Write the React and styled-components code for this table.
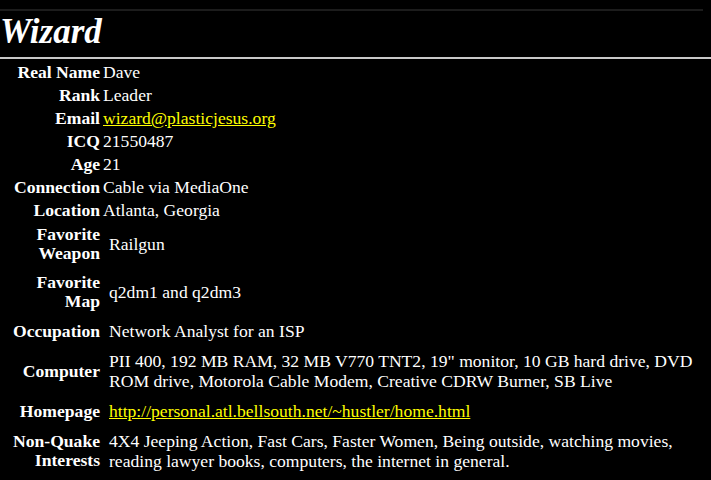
import React from 'react';
import styled, { createGlobalStyle } from 'styled-components';

const Global = createGlobalStyle`
  html, body {
    margin: 0;
    padding: 0;
    background: #000;
  }
  body {
    font-family: "Liberation Serif", "Times New Roman", serif;
    color: #fff;
  }
`

const Page = styled.div`
  width: 711px;
  height: 480px;
  overflow: hidden;
  background: #000;
`
const TopRule = styled.div`
  margin: 9px 8px 0 0;
  height: 2px;
  background: #1c1c1c;
`
const Title = styled.h1`
  margin: 0;
  padding: 1px 0 0 0;
  height: 45px;
  font-size: 35px;
  font-style: italic;
  font-weight: 700;
  line-height: 40px;
`
const Rule = styled.div`
  height: 2px;
  background: #c8c8c8;
`
const Info = styled.div`
  display: grid;
  grid-template-columns: 100px 1fr;
  padding-top: 2px;
`
const Label = styled.div`
  font-weight: 700;
  font-size: 17.6px;
  line-height: ${p => (p.$tall ? '19px' : '23px')};
  text-align: right;
  padding: ${p => (p.$tall ? '3px 0 7px' : '0')};
  display: flex;
  flex-direction: column;
  justify-content: center;
  align-items: flex-end;
  white-space: nowrap;
`
const Value = styled.div`
  font-size: 17.6px;
  line-height: ${p => (p.$tall ? '20px' : '23px')};
  padding: ${p => (p.$tall ? '3px 4px 7px 9px' : '0 0 0 3px')};
  display: flex;
  align-items: center;
`
const Link = styled.a`
  color: #ffff00;
  text-decoration: underline;
`

const basic = [
  ['Real Name', 'Dave'],
  ['Rank', 'Leader'],
  ['Email', <Link href="#">wizard@plasticjesus.org</Link>],
  ['ICQ', '21550487'],
  ['Age', '21'],
  ['Connection', 'Cable via MediaOne'],
  ['Location', 'Atlanta, Georgia'],
]

const more = [
  [['Favorite', 'Weapon'], 'Railgun'],
  [['Favorite', 'Map'], 'q2dm1 and q2dm3'],
  [['Occupation'], 'Network Analyst for an ISP'],
  [['Computer'], 'PII 400, 192 MB RAM, 32 MB V770 TNT2, 19" monitor, 10 GB hard drive, DVD ROM drive, Motorola Cable Modem, Creative CDRW Burner, SB Live'],
  [['Homepage'], <Link href="#">http://personal.atl.bellsouth.net/~hustler/home.html</Link>],
  [['Non-Quake', 'Interests'], '4X4 Jeeping Action, Fast Cars, Faster Women, Being outside, watching movies, reading lawyer books, computers, the internet in general.'],
]

export default function App() {
  return (
    <Page>
      <Global />
      <TopRule />
      <Title>Wizard</Title>
      <Rule />
      <Info>
        {basic.map(([k, v]) => (
          <React.Fragment key={k}>
            <Label>{k}</Label>
            <Value>{v}</Value>
          </React.Fragment>
        ))}
        {more.map(([k, v]) => (
          <React.Fragment key={k.join(' ')}>
            <Label $tall>{k.map(line => <span key={line}>{line}</span>)}</Label>
            <Value $tall><span>{v}</span></Value>
          </React.Fragment>
        ))}
      </Info>
    </Page>
  );
}
